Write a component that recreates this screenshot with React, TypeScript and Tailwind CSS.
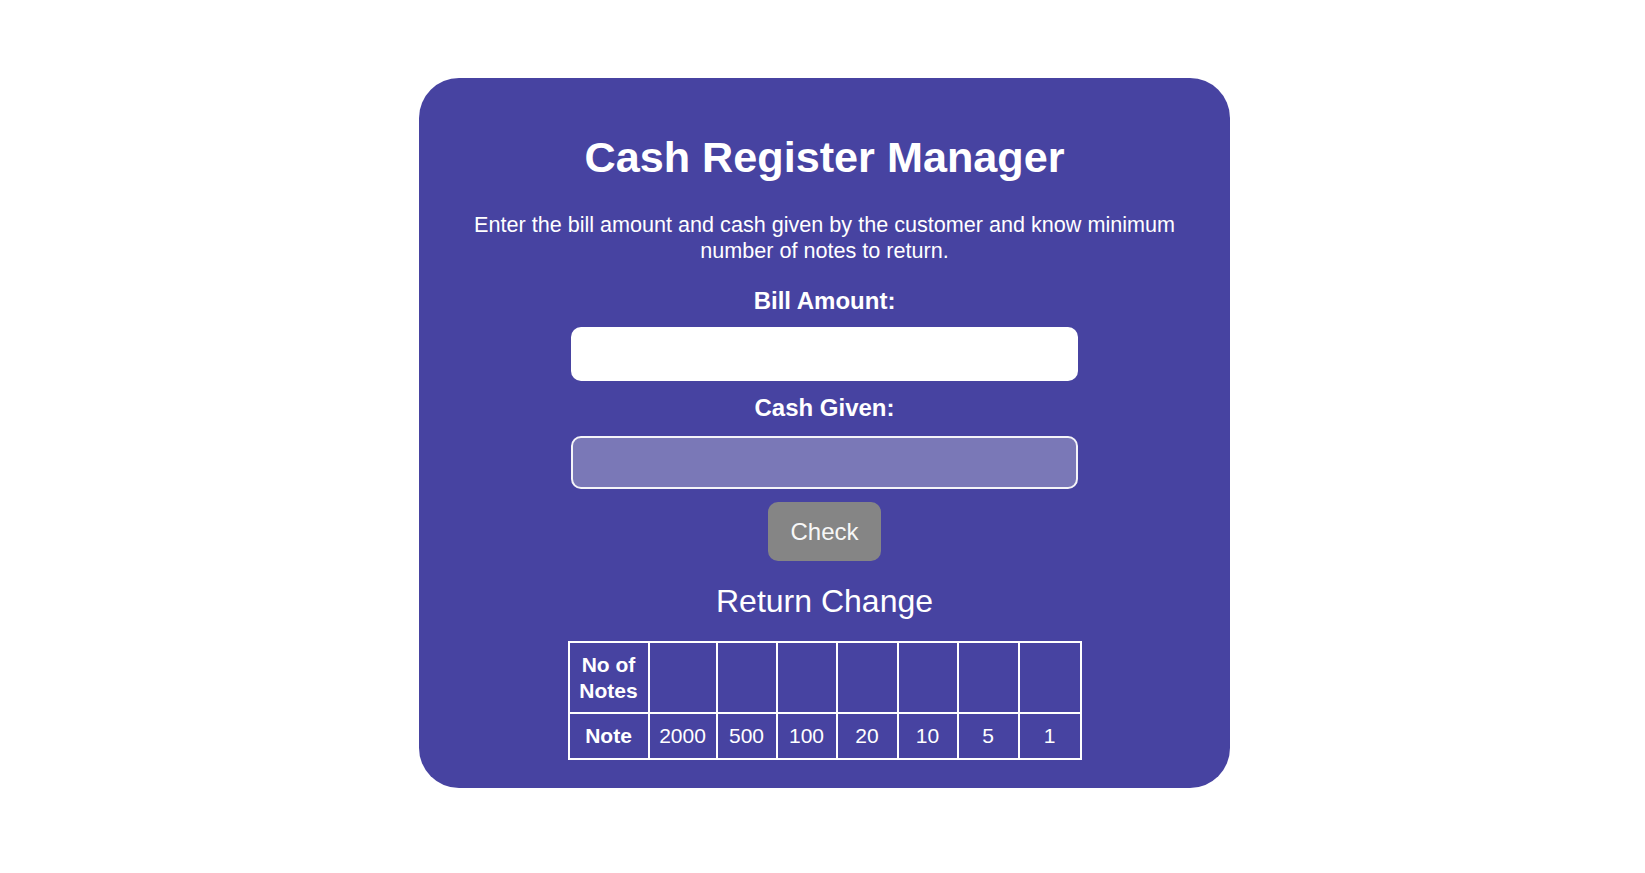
export default function App() {
  const notes = ["2000", "500", "100", "20", "10", "5", "1"];
  const cols = [80, 68, 60, 60, 61, 60, 61, 62];
  return (
    <div
      className="min-h-screen bg-white flex justify-center pt-[78px] pl-[4px]"
      style={{ fontFamily: '"Liberation Sans", Arial, sans-serif' }}
    >
      <div className="w-[811px] h-[710px] bg-[#4743a1] rounded-[40px] flex flex-col items-center text-white pt-[55px]">
        <h1 className="text-[43.2px] font-bold leading-[49px] m-0">Cash Register Manager</h1>
        <p className="text-[21.6px] leading-[26px] text-center mt-[30px] w-[720px]">
          Enter the bill amount and cash given by the customer and know minimum number of notes to return.
        </p>
        <label className="text-[24px] font-bold leading-[26px] mt-[24px]">Bill Amount:</label>
        <input
          type="number"
          className="mt-[13px] w-[507px] h-[54px] rounded-[10px] bg-white border-0 outline-none"
        />
        <label className="text-[24px] font-bold leading-[26px] mt-[14px]">Cash Given:</label>
        <input
          type="number"
          className="mt-[15px] w-[507px] h-[53px] rounded-[10px] bg-[#7a78b7] border-2 border-[#f4f4f8] outline-none"
        />
        <button className="mt-[13px] w-[113px] h-[59px] rounded-[10px] bg-[#858585] text-[24px] text-[#f7f7f7] leading-[26px]">
          Check
        </button>
        <h2 className="text-[32px] leading-[36px] mt-[22px]">Return Change</h2>
        <table className="mt-[22px] w-[512px] table-fixed border-collapse text-[21px] leading-[26px]">
          <colgroup>
            {cols.map((w, i) => (
              <col key={i} style={{ width: w }} />
            ))}
          </colgroup>
          <tbody>
            <tr>
              <th className="border-2 border-white px-[8px] py-[8.5px] font-bold text-center">No of Notes</th>
              {notes.map((n) => (
                <td key={n} className="border-2 border-white px-[8px] py-[8.5px]"></td>
              ))}
            </tr>
            <tr>
              <th className="border-2 border-white px-[4px] pt-[8.5px] pb-[9px] font-bold text-center">Note</th>
              {notes.map((n) => (
                <td key={n} className="border-2 border-white px-[2px] pt-[8.5px] pb-[9px] text-center">
                  {n}
                </td>
              ))}
            </tr>
          </tbody>
        </table>
      </div>
    </div>
  );
}
